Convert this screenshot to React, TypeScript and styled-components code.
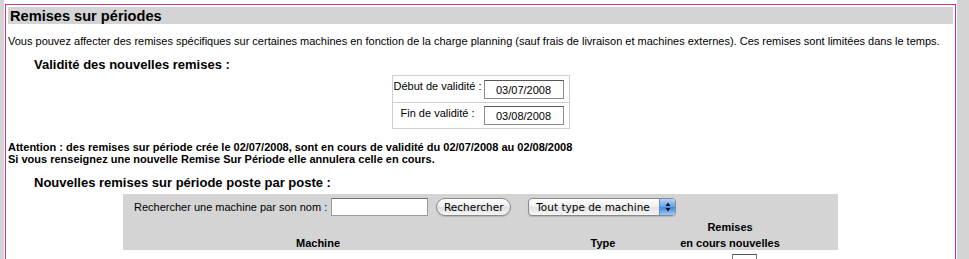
import styled, { createGlobalStyle } from "styled-components";

const GlobalStyle = createGlobalStyle`
  html, body {
    margin: 0;
    padding: 0;
    background-color: #d4d4d4;
    font-family: "Liberation Sans", Arial, sans-serif;
    color: #000;
  }
`;

const Page = styled.div`
  margin-left: 4px;
  width: 951px;
  padding: 4px 1px 0;
  background-color: #fff;
  height: 255px;
  overflow: hidden;
`;

const Frame = styled.div`
  border: 1px solid #c8338f;
  border-bottom: none;
  padding: 2px 2px 0;
  height: 300px;
`;

const TitleBar = styled.h1`
  margin: 0;
  height: 17px;
  line-height: 18px;
  padding-left: 2px;
  background-color: #d4d4d4;
  font-size: 14.6px;
  font-weight: bold;
`;

const Intro = styled.p`
  margin: 11px 0 0;
  font-size: 11px;
  line-height: 13px;
`;

const SubTitle = styled.h2<{ $gap: number }>`
  margin: ${(p) => p.$gap}px 0 0;
  padding-left: 26px;
  font-size: 13px;
  font-weight: bold;
  line-height: 15px;
`;

const DateBox = styled.div`
  margin: 3px auto 0;
  width: 176px;
  border: 1px solid #cfcfcf;
  display: flex;
  flex-direction: column;
`;

const DateRow = styled.div<{ $last?: boolean }>`
  display: grid;
  grid-template-columns: 90px 1fr;
  align-items: center;
  height: ${(p) => (p.$last ? 25 : 26)}px;
  border-bottom: ${(p) => (p.$last ? "none" : "1px solid #cfcfcf")};
`;

const DateLabel = styled.span`
  font-size: 11px;
  line-height: 13px;
  text-align: center;
  align-self: start;
  padding-top: 4px;
`;

const DateInput = styled.div`
  width: 80px;
  height: 19px;
  box-sizing: border-box;
  margin-left: 1px;
  border: 1px solid #8a8a8a;
  border-top-color: #555;
  font-size: 11px;
  line-height: 19px;
  text-align: center;
`;

const Warning = styled.p`
  margin: 12px 0 0;
  font-size: 11px;
  line-height: 12px;
  font-weight: bold;
`;

const Board = styled.div`
  margin: 4px auto 0;
  width: 715px;
  background-color: #d4d4d4;
`;

const SearchBar = styled.div`
  display: flex;
  align-items: center;
  height: 26px;
  padding-left: 11px;
  font-size: 11px;
`;

const SearchInput = styled.div`
  width: 97px;
  height: 18px;
  box-sizing: border-box;
  margin-left: 4px;
  background: #fff;
  border: 1px solid #9a9a9a;
  border-top-color: #6f6f6f;
`;

const AquaButton = styled.div`
  margin-left: 8px;
  width: 75px;
  height: 18px;
  box-sizing: border-box;
  border: 1px solid #8a8a8a;
  border-radius: 9px;
  background: linear-gradient(#ffffff, #ececec 50%, #dedede 51%, #f6f6f6);
  box-shadow: 0 1px 1px rgba(0, 0, 0, 0.15);
  font-family: "DejaVu Sans", sans-serif;
  font-size: 10.5px;
  line-height: 16px;
  text-align: center;
`;

const Select = styled.div`
  margin-left: 17px;
  height: 18px;
  width: 148px;
  box-sizing: border-box;
  display: flex;
  border: 1px solid #8a8a8a;
  border-radius: 4px;
  overflow: hidden;
  background: linear-gradient(#ffffff, #eeeeee 50%, #e2e2e2 51%, #f6f6f6);
  box-shadow: 0 1px 1px rgba(0, 0, 0, 0.15);
  font-family: "DejaVu Sans", sans-serif;
  font-size: 10.5px;
  line-height: 16px;
`;

const SelectText = styled.span`
  flex: 1;
  padding-left: 7px;
  white-space: nowrap;
`;

const Stepper = styled.span`
  width: 15px;
  display: flex;
  align-items: center;
  justify-content: center;
  background: linear-gradient(#b3d4f7, #62a2ea 50%, #3d86df 51%, #9ccaf6);
  border-left: 1px solid #6b8fbd;
`;

const Grid = styled.table`
  width: 100%;
  border-collapse: collapse;
  table-layout: fixed;
  font-size: 11px;
  font-weight: bold;
`;

const Col = styled.col<{ $w?: number }>`
  width: ${(p) => (p.$w ? `${p.$w}px` : "auto")};
`;

const Head = styled.th<{ $h?: number; $shift?: number }>`
  padding: 0 0 1px ${(p) => p.$shift ?? 0}px;
  height: ${(p) => p.$h ?? 13}px;
  line-height: 12px;
  text-align: center;
  vertical-align: bottom;
  white-space: nowrap;
`;

const Body = styled.tr`
  background: #fff;
`;

const Cell = styled.td`
  height: 14px;
  padding: 4px 0 0 2px;
  font-weight: normal;
  text-align: left;
  vertical-align: top;
  white-space: nowrap;
`;

const PctInput = styled.span`
  display: inline-block;
  width: 25px;
  height: 17px;
  box-sizing: border-box;
  border: 1px solid #777;
  border-top-color: #555;
  text-align: right;
  padding-right: 5px;
  line-height: 17px;
`;

function App() {
  return (
    <>
      <GlobalStyle />
      <Page>
        <Frame>
          <TitleBar>Remises sur périodes</TitleBar>
          <Intro>
            Vous pouvez affecter des remises spécifiques sur certaines machines en fonction de la charge planning (sauf frais de livraison et machines externes). Ces remises sont limitées dans le temps.
          </Intro>
          <SubTitle $gap={9}>Validité des nouvelles remises :</SubTitle>

          <DateBox>
            <DateRow>
              <DateLabel>Début de validité :</DateLabel>
              <DateInput>03/07/2008</DateInput>
            </DateRow>
            <DateRow $last>
              <DateLabel>Fin de validité :</DateLabel>
              <DateInput>03/08/2008</DateInput>
            </DateRow>
          </DateBox>

          <Warning>
            Attention : des remises sur période crée le 02/07/2008, sont en cours de validité du 02/07/2008 au 02/08/2008
            <br />
            Si vous renseignez une nouvelle Remise Sur Période elle annulera celle en cours.
          </Warning>

          <SubTitle $gap={10}>Nouvelles remises sur période poste par poste :</SubTitle>

          <Board>
            <SearchBar>
              Rechercher une machine par son nom :
              <SearchInput />
              <AquaButton>Rechercher</AquaButton>
              <Select>
                <SelectText>Tout type de machine</SelectText>
                <Stepper>
                  <svg width="6" height="10" viewBox="0 0 6 10">
                    <path d="M3 0.5 L5.5 4 L0.5 4 Z" fill="#111" />
                    <path d="M3 9.5 L5.5 6 L0.5 6 Z" fill="#111" />
                  </svg>
                </Stepper>
              </Select>
            </SearchBar>
            <Grid>
              <colgroup>
                <Col $w={390} />
                <Col $w={160} />
                <Col $w={57} />
                <Col $w={57} />
                <Col />
              </colgroup>
              <thead>
                <tr>
                  <Head />
                  <Head />
                  <Head colSpan={2}>Remises</Head>
                  <Head />
                </tr>
                <tr>
                  <Head $h={15}>Machine</Head>
                  <Head $h={15} $shift={20}>Type</Head>
                  <Head $h={15} colSpan={2}>en cours nouvelles</Head>
                  <Head $h={15} />
                </tr>
              </thead>
              <tbody>
                <Body>
                  <Cell />
                  <Cell />
                  <Cell />
                  <Cell>
                    <PctInput>0</PctInput> %
                  </Cell>
                  <Cell />
                </Body>
              </tbody>
            </Grid>
          </Board>
        </Frame>
      </Page>
    </>
  );
}

export default App;
